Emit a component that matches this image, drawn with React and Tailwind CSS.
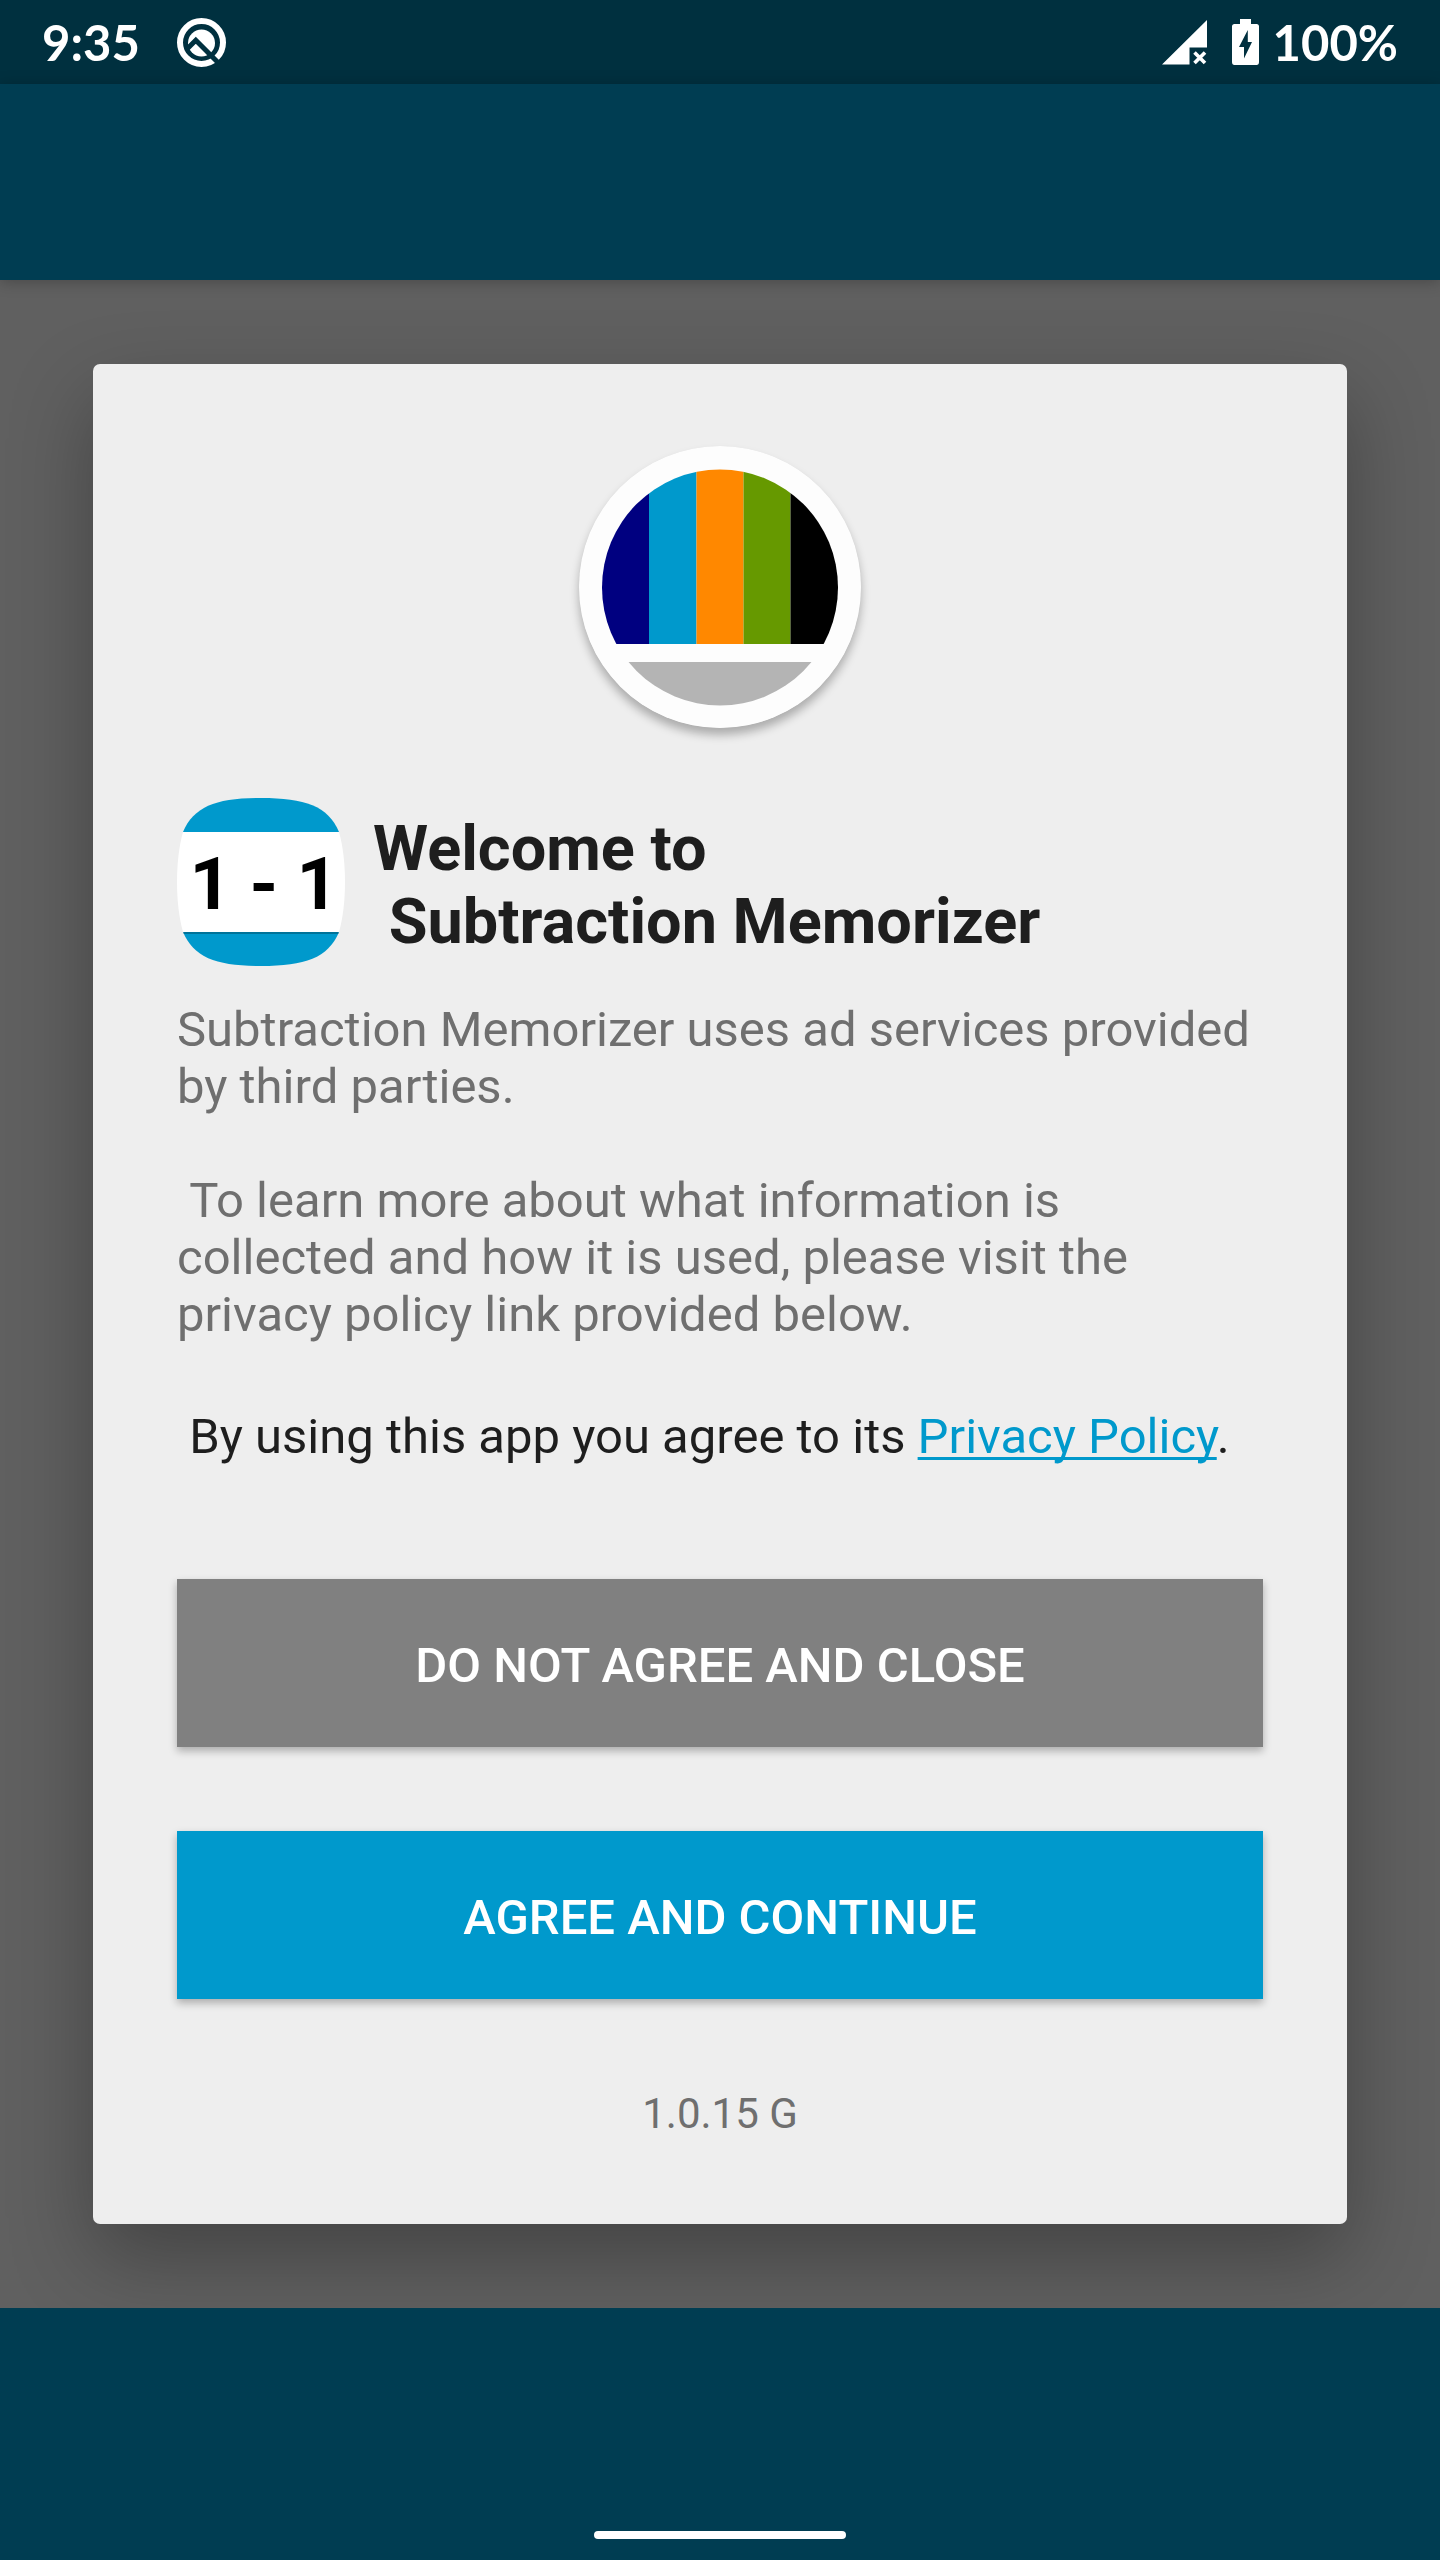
import { useState } from "react";

function App() {
    const [accepted, setAccepted] = useState(false);

    return (
        <div className="min-h-screen flex flex-col bg-[#606060] font-['Roboto',sans-serif] text-[49px] leading-[57px] text-[#1e1e1e]">
            <StatusBar />
            <header className="h-[196px] shrink-0 bg-[#003d52] shadow-[0_2px_14px_rgba(0,0,0,0.25)]" />

            <main className="flex-1 flex items-center px-[93px] py-[84px]">
                <section
                    role="dialog"
                    aria-labelledby="welcome"
                    data-accepted={accepted}
                    className="w-full flex flex-col bg-[#eeeeee] rounded-[7px] px-[84px] py-[82px] shadow-[0_34px_84px_rgba(0,0,0,0.3)]"
                >
                    <CompanyLogo />

                    <div className="mt-[70px] flex items-center gap-[28px]">
                        <AppIcon />
                        <h1 id="welcome" className="pt-[6px] text-[63px] leading-[73px] font-bold whitespace-pre-wrap">
                            {"Welcome to\n Subtraction Memorizer"}
                        </h1>
                    </div>

                    <p className="mt-[35px] whitespace-pre-wrap text-[#6f6f6f]">
                        {"Subtraction Memorizer uses ad services provided by third parties.\n\n To learn more about what information is collected and how it is used, please visit the privacy policy link provided below."}
                    </p>

                    <p className="mt-[65px] whitespace-pre-wrap">
                        {" By using this app you agree to its "}
                        <a href="#privacy" className="text-[#0099cc] underline decoration-[3px] underline-offset-[4px] [text-decoration-skip-ink:none]">
                            Privacy Policy
                        </a>
                        .
                    </p>

                    <div className="mt-[114px] flex flex-col gap-[84px]">
                        <DialogButton className="bg-[#808080]" onClick={() => setAccepted(false)}>
                            DO NOT AGREE AND CLOSE
                        </DialogButton>
                        <DialogButton className="bg-[#0099cc]" onClick={() => setAccepted(true)}>
                            AGREE AND CONTINUE
                        </DialogButton>
                    </div>

                    <p className="mt-[86px] text-center text-[42px] text-[#6f6f6f]">1.0.15 G</p>
                </section>
            </main>

            {/* Bottom bar with the gesture handle */}
            <footer className="h-[252px] shrink-0 flex justify-center items-end pb-[21px] bg-[#003d52]">
                <div className="w-[252px] h-[8px] rounded-full bg-white" />
            </footer>
        </div>
    );
}

function StatusBar() {
    return (
        <div className="h-[84px] shrink-0 flex justify-between items-center px-[42px] bg-[#00303f] text-white font-['Lato',sans-serif] font-bold text-[49px]">
            <div className="flex items-center gap-[37px]">
                <span>9:35</span>
                <svg className="w-[49px] h-[49px]" viewBox="0 0 49 49" aria-hidden="true">
                    <circle cx="24.5" cy="24.5" r="21.5" fill="none" stroke="#fff" strokeWidth="6" />
                    <circle cx="24.5" cy="25" r="13.5" fill="#fff" />
                    <path d="M9 32L18.8 22.300L42 45.500" fill="none" stroke="#00303f" strokeWidth="5" />
                </svg>
            </div>
            <div className="flex items-center">
                <svg className="w-[45px] h-[45px]" viewBox="0 0 45 45" aria-hidden="true">
                    <path d="M0 44.500L45 0V27.500H27.500V44.500Z" fill="#fff" />
                    <path d="M32.500 32.500L43 43M43 32.500L32.500 43" stroke="#fff" strokeWidth="3.6" />
                </svg>
                <svg className="ml-[25px] w-[27px] h-[46px]" viewBox="0 0 27 46" aria-hidden="true">
                    <path d="M8 0H19V5H24.500Q27 5 27 7.500V43Q27 46 24.500 46H2.500Q0 46 0 43V7.500Q0 5 2.500 5H8Z" fill="#fff" />
                    <path d="M15.800 11L7 28H12V39.500L20 23H15.800Z" fill="#00303f" />
                </svg>
                <span className="ml-[14px]">100%</span>
            </div>
        </div>
    );
}

function CompanyLogo() {
    return (
        <svg className="self-center w-[282px] h-[282px] rounded-full shadow-[0_7px_10px_rgba(0,0,0,0.28)]" viewBox="0 0 282 282" aria-hidden="true">
            <clipPath id="disc">
                <circle cx="141" cy="141.500" r="118" />
            </clipPath>
            <circle cx="141" cy="141" r="141" fill="#fdfdfd" />
            <g clipPath="url(#disc)">
                <rect x="20" y="20" width="50" height="178" fill="#000080" />
                <rect x="70" y="20" width="47.500" height="178" fill="#0099cc" />
                <rect x="117.500" y="20" width="47" height="178" fill="#ff8800" />
                <rect x="164.500" y="20" width="47" height="178" fill="#669900" />
                <rect x="211.500" y="20" width="50" height="178" fill="#000" />
                <rect x="20" y="216" width="242" height="50" fill="#b4b4b4" />
            </g>
        </svg>
    );
}

function AppIcon() {
    return (
        <svg className="w-[168px] h-[168px] shrink-0" viewBox="0 0 168 168" role="img" aria-label="Subtraction Memorizer">
            <clipPath id="squircle">
                <path d="M84 0C128 0 151 8 162 34C170 62 170 106 162 134C151 160 128 168 84 168C40 168 17 160 6 134C-2 106 -2 62 6 34C17 8 40 0 84 0Z" />
            </clipPath>
            <g clipPath="url(#squircle)">
                <rect width="168" height="34" fill="#0099cc" />
                <rect y="34" width="168" height="101" fill="#fff" />
                <rect y="135" width="168" height="33" fill="#0099cc" />
                <rect y="134" width="168" height="2" fill="#007399" />
            </g>
            <text x="87" y="111" textAnchor="middle" fontSize="73" fontWeight="700" fill="#000">1 - 1</text>
        </svg>
    );
}

function DialogButton({ className, onClick, children }) {
    return (
        <button
            onClick={onClick}
            className={`h-[168px] w-full pt-[4px] font-medium text-white shadow-[0_4px_8px_rgba(0,0,0,0.28)] ${className}`}
        >
            {children}
        </button>
    );
}

export default App;
